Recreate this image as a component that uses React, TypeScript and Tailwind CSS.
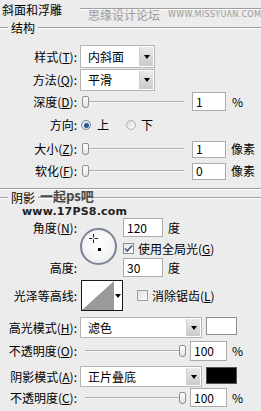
import React from "react";

const Arrow = () => (
  <div className="w-0 h-0 border-l-[3px] border-r-[3px] border-t-[4px] border-l-transparent border-r-transparent border-t-black" />
);

function Dropdown({ w, h, text, arrowW = 14 }: { w: string; h: string; text: string; arrowW?: number }) {
  return (
    <div className={`${w} ${h} bg-white border border-[#b4b4b4] flex items-stretch`}>
      <div className="flex-1 flex items-center pl-[7px] text-[12px]">{text}</div>
      <div
        className="flex items-center justify-center bg-gradient-to-b from-[#ebebeb] to-[#c9c9c9] border-l border-[#d0d0d0] m-[1px]"
        style={{ width: arrowW }}
      >
        <Arrow />
      </div>
    </div>
  );
}

function Field({ v, w = "w-[34px]", h = "h-[19px]" }: { v: string; w?: string; h?: string }) {
  return (
    <div className={`${w} ${h} bg-white border border-[#ababab] flex items-center pl-[3px] text-[12px]`}>{v}</div>
  );
}

function Slider({ right = false }: { right?: boolean }) {
  return (
    <div className="relative w-[103px] h-[12px]">
      <div className="absolute left-[2px] right-0 top-[5px] h-[1px] bg-[#b0b0b0]" />
      <div className="absolute left-[2px] right-0 top-[6px] h-[1px] bg-[#f8f8f8]" />
      <div
        className={`absolute top-0 w-[7px] h-[12px] bg-gradient-to-b from-white to-[#e2e2e2] border border-[#8e8e8e] rounded-t-[2px] rounded-b-[3px] ${
          right ? "right-0" : "left-[1px]"
        }`}
      />
    </div>
  );
}

function Label({ children, w = "w-[78px]" }: { children: React.ReactNode; w?: string }) {
  return <div className={`${w} text-right pr-[1px] shrink-0 whitespace-nowrap`}>{children}</div>;
}

function GroupLine({ label, wm }: { label: string; wm?: React.ReactNode }) {
  return (
    <div className="relative flex items-center h-[16px]">
      <div className="w-[8px] h-[2px] border-t border-[#a0a0a0] border-b border-b-white" />
      <div className="px-[3px] leading-none text-[12px]">{label}</div>
      <div className="flex-1 h-[2px] border-t border-[#a0a0a0] border-b border-b-white" />
      {wm}
    </div>
  );
}

export default function App() {
  return (
    <div className="w-[261px] h-[411px] bg-[#ececec] overflow-hidden relative font-['Noto_Sans_CJK_SC',sans-serif] text-[12px] leading-none text-black">
      {/* Title */}
      <div className="relative h-[20px] flex items-center">
        <div className="pl-[2px] pr-[18px] text-[12px] whitespace-nowrap">斜面和浮雕</div>
        <div className="flex-1 h-[2px] border-t border-[#a0a0a0] border-b border-b-white mb-[2px]" />
        <div className="absolute left-[88px] top-[9px] flex items-center gap-[8px] text-[#9b9b9b] whitespace-nowrap">
          <span className="text-[12px] leading-none whitespace-nowrap">思缘设计论坛</span>
          <span className="text-[8px] font-['DejaVu_Sans',sans-serif] tracking-[0.3px] leading-none whitespace-nowrap">
            WWW.MISSYUAN.COM
          </span>
        </div>
      </div>

      <GroupLine label="结构" />

      {/* 样式 */}
      <div className="flex items-center mt-[9px]">
        <Label>样式(<u>T</u>):</Label>
        <div className="ml-[2px]">
          <Dropdown w="w-[75px]" h="h-[23px]" text="内斜面" />
        </div>
      </div>
      <div className="flex items-center mt-[1px]">
        <Label>方法(<u>Q</u>):</Label>
        <div className="ml-[2px]">
          <Dropdown w="w-[75px]" h="h-[22px]" text="平滑" />
        </div>
      </div>
      {/* 深度 */}
      <div className="flex items-center h-[19px] mt-[1px]">
        <Label>深度(<u>D</u>):</Label>
        <div className="ml-[3px]">
          <Slider />
        </div>
        <div className="ml-[8px]">
          <Field v="1" />
        </div>
        <div className="ml-[6px]">%</div>
      </div>
      {/* 方向 */}
      <div className="flex items-center h-[20px] mt-[4px]">
        <Label>方向:</Label>
        <div className="ml-[3px] w-[10px] h-[10px] rounded-full border border-[#7a8797] bg-[#dfe8f0] flex items-center justify-center">
          <div className="w-[5px] h-[5px] rounded-full bg-[#245a8c]" />
        </div>
        <div className="ml-[6px]">上</div>
        <div className="ml-[17px] w-[10px] h-[10px] rounded-full border border-[#b0b0b0] bg-gradient-to-br from-[#d8d8d8] to-white" />
        <div className="ml-[5px]">下</div>
      </div>
      {/* 大小 */}
      <div className="flex items-center h-[18px] mt-[5px]">
        <Label>大小(<u>Z</u>):</Label>
        <div className="ml-[3px]">
          <Slider />
        </div>
        <div className="ml-[8px]">
          <Field v="1" h="h-[17px]" />
        </div>
        <div className="ml-[5px]">像素</div>
      </div>
      {/* 软化 */}
      <div className="flex items-center h-[18px] mt-[4px]">
        <Label>软化(<u>F</u>):</Label>
        <div className="ml-[3px]">
          <Slider />
        </div>
        <div className="ml-[8px]">
          <Field v="0" h="h-[17px]" />
        </div>
        <div className="ml-[5px]">像素</div>
      </div>

      {/* separator */}
      <div className="mt-[8px] h-[2px] border-t border-[#9c9c9c] border-b border-b-white" />

      <GroupLine
        label="阴影"
        wm={
          <div className="absolute left-[40px] top-[-1px] text-[13px] leading-none text-[#4a4a4a] font-bold whitespace-nowrap">
            一起ps吧
          </div>
        }
      />
      <div className="relative h-[12px]">
        <div className="absolute left-[22px] top-[0px] text-[11px] leading-none font-bold font-['DejaVu_Sans',sans-serif] text-[#222] tracking-[0.2px] whitespace-nowrap">
          www.17PS8.com
        </div>
      </div>

      {/* angle block */}
      <div className="flex h-[59px]">
        <div className="w-[78px] flex flex-col justify-between shrink-0 text-right pr-[1px]">
          <div className="h-[19px] flex items-center justify-end">角度(<u>N</u>):</div>
          <div className="h-[19px] flex items-center justify-end">高度:</div>
        </div>
        <div className="w-[45px] shrink-0 pt-[10px] pl-[2px]">
          <div className="relative w-[37px] h-[37px] rounded-full border-2 border-[#7b8396] bg-[radial-gradient(circle_at_50%_40%,#ffffff_0%,#f4f4f4_60%,#dcdcdc_100%)]">
            <svg className="absolute left-[7px] top-[4px]" width="9" height="9" viewBox="0 0 9 9">
              <path d="M4.5 0v3.5M4.5 5.5V9M0 4.5h3.5M5.5 4.5H9" stroke="#222" strokeWidth="1" />
            </svg>
            <div className="absolute left-[16px] top-[18px] w-[3px] h-[3px] bg-black" />
          </div>
        </div>
        <div className="flex flex-col">
          <div className="flex items-center h-[19px]">
            <Field v="120" w="w-[40px]" />
            <div className="ml-[5px]">度</div>
          </div>
          <div className="flex items-center h-[21px] mt-[1px]">
            <div className="w-[11px] h-[11px] border border-[#8c8c8c] bg-gradient-to-br from-[#e6e6e6] to-white flex items-center justify-center">
              <svg width="9" height="9" viewBox="0 0 9 9">
                <path d="M1 4.5l2.3 2.5L8 1.5" stroke="#4b5a88" strokeWidth="1.8" fill="none" />
              </svg>
            </div>
            <div className="ml-[4px] whitespace-nowrap">
              使用全局光(<u>G</u>)
            </div>
          </div>
          <div className="flex items-center h-[19px] -mt-[1px]">
            <Field v="30" w="w-[40px]" />
            <div className="ml-[5px]">度</div>
          </div>
        </div>
      </div>

      {/* contour */}
      <div className="flex items-center h-[31px] mt-[3px]">
        <Label>光泽等高线:</Label>
        <div className="ml-[3px] w-[42px] h-[31px] border border-[#1a1a1a] bg-white flex">
          <svg width="32" height="29" viewBox="0 0 32 29" className="block">
            <rect x="0" y="0" width="32" height="29" fill="#ffffff" />
            <polygon points="0,29 32,0 32,29" fill="#9a9a9a" />
          </svg>
          <div className="flex-1 flex items-center justify-center">
            <Arrow />
          </div>
        </div>
        <div className="ml-[14px] w-[11px] h-[11px] border border-[#9c9c9c] bg-gradient-to-br from-[#dedede] to-white" />
        <div className="ml-[4px] whitespace-nowrap">
          消除锯齿(<u>L</u>)
        </div>
      </div>

      {/* 高光模式 */}
      <div className="flex items-center h-[21px] mt-[6px]">
        <Label>高光模式(<u>H</u>):</Label>
        <div className="ml-[2px]">
          <Dropdown w="w-[122px]" h="h-[21px]" text="滤色" />
        </div>
        <div className="ml-[4px] w-[31px] h-[18px] bg-white border border-[#8d8d8d] self-start" />
      </div>
      {/* 不透明度 O */}
      <div className="flex items-center h-[20px] mt-[3px]">
        <Label>不透明度(<u>O</u>):</Label>
        <div className="ml-[5px]">
          <Slider right />
        </div>
        <div className="ml-[4px]">
          <Field v="100" w="w-[37px]" h="h-[20px]" />
        </div>
        <div className="ml-[5px]">%</div>
      </div>
      {/* 阴影模式 */}
      <div className="flex items-center h-[21px] mt-[5px]">
        <Label>阴影模式(<u>A</u>):</Label>
        <div className="ml-[2px]">
          <Dropdown w="w-[122px]" h="h-[21px]" text="正片叠底" />
        </div>
        <div className="ml-[4px] w-[31px] h-[17px] bg-black border border-[#555] self-start mt-[1px]" />
      </div>
      {/* 不透明度 C */}
      <div className="flex items-center h-[19px] mt-[1px]">
        <Label>不透明度(<u>C</u>):</Label>
        <div className="ml-[5px]">
          <Slider right />
        </div>
        <div className="ml-[4px]">
          <Field v="100" w="w-[37px]" h="h-[19px]" />
        </div>
        <div className="ml-[5px]">%</div>
      </div>
    </div>
  );
}
